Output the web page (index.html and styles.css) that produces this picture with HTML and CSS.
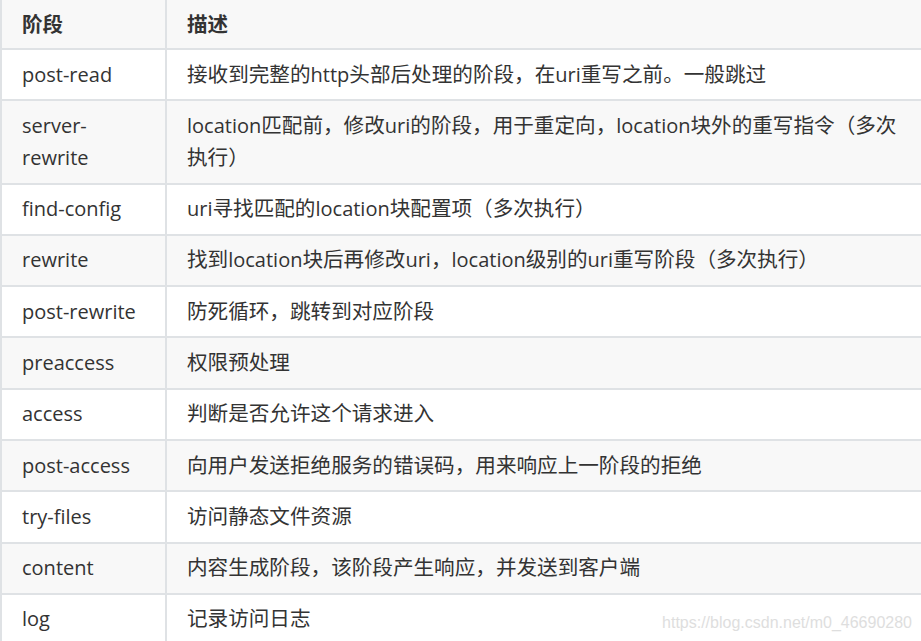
FILE: index.html
```html
<!DOCTYPE html>
<html lang="zh">
<head>
<meta charset="utf-8">
<link rel="stylesheet" href="styles.css">
</head>
<body>
<div class="page">
<table class="phases">
<colgroup><col class="c1"><col class="c2"></colgroup>
<thead>
<tr><th>阶段</th><th>描述</th></tr>
</thead>
<tbody>
<tr><td>post-read</td><td><span class="zh">接收到完整的</span>http<span class="zh">头部后处理的阶段，在</span>uri<span class="zh">重写之前。一般跳过</span></td></tr>
<tr><td>server-rewrite</td><td>location<span class="zh">匹配前，修改</span>uri<span class="zh">的阶段，用于重定向，</span>location<span class="zh">块外的重写指令（多次执行）</span></td></tr>
<tr><td>find-config</td><td>uri<span class="zh">寻找匹配的</span>location<span class="zh">块配置项（多次执行）</span></td></tr>
<tr><td>rewrite</td><td><span class="zh">找到</span>location<span class="zh">块后再修改</span>uri<span class="zh">，</span>location<span class="zh">级别的</span>uri<span class="zh">重写阶段（多次执行）</span></td></tr>
<tr><td>post-rewrite</td><td><span class="zh">防死循环，跳转到对应阶段</span></td></tr>
<tr><td>preaccess</td><td><span class="zh">权限预处理</span></td></tr>
<tr><td>access</td><td><span class="zh">判断是否允许这个请求进入</span></td></tr>
<tr><td>post-access</td><td><span class="zh">向用户发送拒绝服务的错误码，用来响应上一阶段的拒绝</span></td></tr>
<tr><td>try-files</td><td><span class="zh">访问静态文件资源</span></td></tr>
<tr><td>content</td><td><span class="zh">内容生成阶段，该阶段产生响应，并发送到客户端</span></td></tr>
<tr><td>log</td><td><span class="zh">记录访问日志</span></td></tr>
</tbody>
</table>
<div class="mark">https://blog.csdn.net/m0_46690280</div>
</div>
</body>
</html>
```
FILE: styles.css
```css
html, body {
  margin: 0;
  padding: 0;
  background: #ffffff;
  overflow: hidden;
}
.page {
  position: relative;
  width: 921px;
  height: 641px;
  overflow: hidden;
}
.phases {
  border-collapse: collapse;
  table-layout: fixed;
  width: 100%;
  font-family: "Open Sans", "Noto Sans CJK SC", sans-serif;
  font-size: 20px;
  line-height: 32px;
  color: #333333;
}
.c1 { width: 165px; }
.phases th,
.phases td {
  border: 2px solid #dfe2e5;
  padding: 8.65px 20px;
  text-align: left;
  vertical-align: middle;
  word-wrap: break-word;
}
.phases th:last-child,
.phases td:last-child {
  border-right: none;
}
.phases th {
  border-top: none;
  font-weight: bold;
  font-size: 20.5px;
  background: #f8f8f8;
  padding-top: 8px;
  padding-bottom: 8px;
}
.zh {
  font-family: "Noto Sans CJK SC", sans-serif;
  font-size: 20.6px;
  line-height: 1;
}
.phases tbody tr:nth-child(2n) {
  background: #f8f8f8;
}
.mark {
  position: absolute;
  right: 9px;
  bottom: 10px;
  font-family: "Liberation Sans", Arial, sans-serif;
  font-size: 16px;
  line-height: 16px;
  color: #dedede;
}
```
